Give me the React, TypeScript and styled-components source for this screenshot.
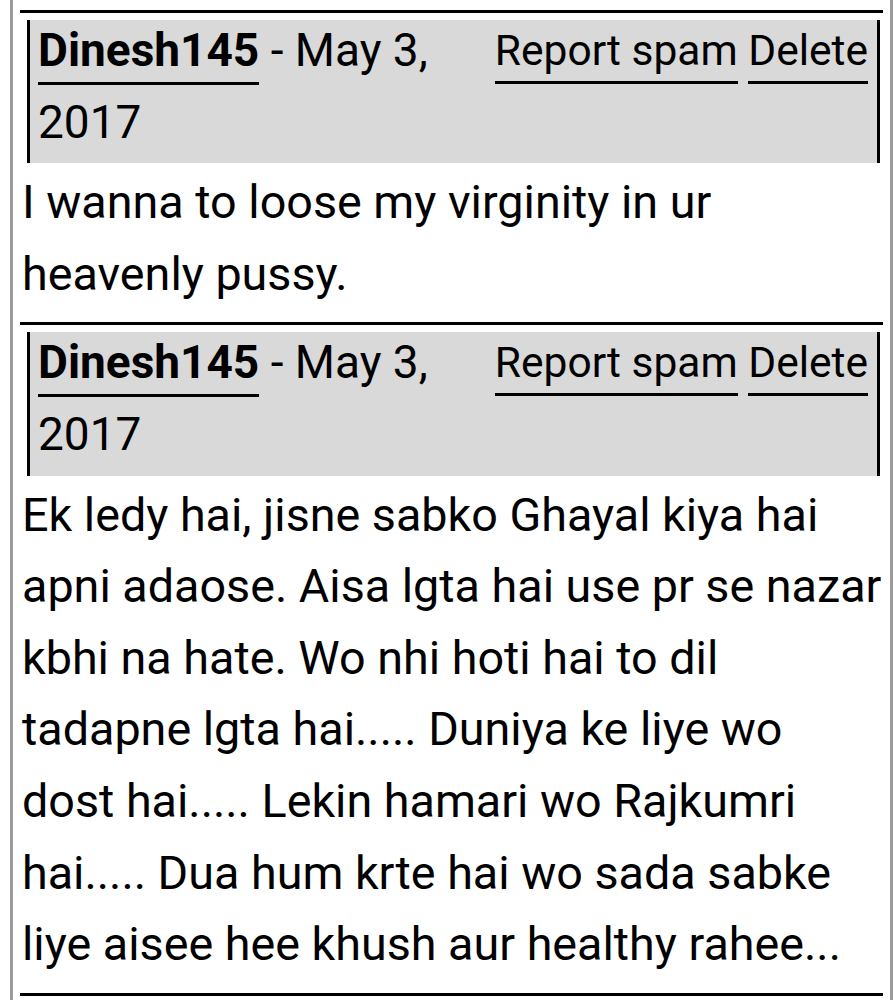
import React from "react";
import styled, { createGlobalStyle } from "styled-components";

const Global = createGlobalStyle`
  html, body { margin: 0; padding: 0; background: #fff; }
  body { font-family: Roboto, "Noto Sans", Arial, sans-serif; color: #000; }
`;

const Page = styled.div`
  margin-left: 10px;
  width: 883px;
  border-left: 3px solid #9a9a9a;
  border-right: 3px solid #9a9a9a;
  padding: 10px 7px 0 7px;
  min-height: 1000px;
  box-sizing: border-box;
  font-size: 46.7px;
  line-height: 71.6px;
`;

const Comment = styled.div`
  border-top: 3px solid #000;
  padding-top: 7px;
`;

const Header = styled.div`
  margin-left: 7px;
  margin-right: 3px;
  display: flex;
  justify-content: space-between;
  background: #d9d9d9;
  border-left: 3px solid #000;
  border-right: 3px solid #000;
  padding: 0 9px 5px 8px;
`;

const Meta = styled.div`
  flex: 1;
  min-width: 0;
  margin-top: -5px;
  font-size: 46px;
`;

const Actions = styled.div`
  white-space: nowrap;
  margin-top: -5px;
  margin-left: 40px;
  font-size: 42.5px;
`;

const Link = styled.a<{ $bold?: boolean }>`
  color: #000;
  text-decoration: none;
  font-weight: ${(p) => (p.$bold ? 700 : 400)};
  border-bottom: 3px solid #000;
  padding-bottom: ${(p) => (p.$bold ? 5 : 6)}px;
  cursor: pointer;
`;

const Body = styled.div`
  padding: 4px 0 12px 2px;
`;

type C = { author: string; date: string; text: string };

const comments: C[] = [
  {
    author: "Dinesh145",
    date: "May 3, 2017",
    text: "I wanna to loose my virginity in ur heavenly pussy.",
  },
  {
    author: "Dinesh145",
    date: "May 3, 2017",
    text:
      "Ek ledy hai, jisne sabko Ghayal kiya hai apni adaose. Aisa lgta hai use pr se nazar kbhi na hate. Wo nhi hoti hai to dil tadapne lgta hai..... Duniya ke liye wo dost hai..... Lekin hamari wo Rajkumri hai..... Dua hum krte hai wo sada sabke liye aisee hee khush aur healthy rahee...",
  },
];

export default function App() {
  return (
    <>
      <Global />
      <Page>
        {comments.map((c, i) => (
          <Comment key={i}>
            <Header>
              <Meta>
                <Link $bold>{c.author}</Link> - {c.date}
              </Meta>
              <Actions>
                <Link>Report spam</Link> <Link>Delete</Link>
              </Actions>
            </Header>
            <Body>{c.text}</Body>
          </Comment>
        ))}
        <Comment />
      </Page>
    </>
  );
}
